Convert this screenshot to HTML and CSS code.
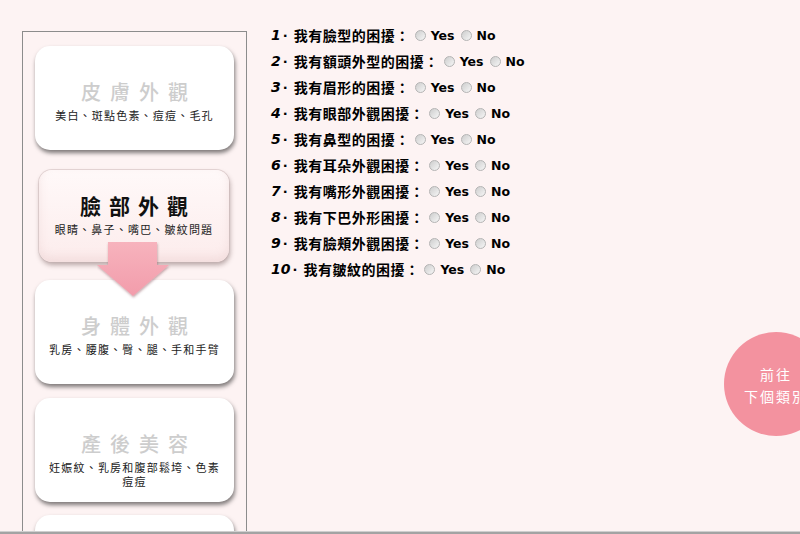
FILE: index.html
```html
<!DOCTYPE html>
<html lang="zh-Hant">
<head>
<meta charset="utf-8">
<title>問卷</title>
<link rel="stylesheet" href="styles.css">
</head>
<body>
<div class="page">
  <aside class="panel">
    <div class="card">
      <div class="card-title">皮膚外觀</div>
      <div class="card-sub">美白、斑點色素、痘痘、毛孔</div>
    </div>
    <div class="card card-active">
      <div class="card-title">臉部外觀</div>
      <div class="card-sub">眼睛、鼻子、嘴巴、皺紋問題</div>
      <svg class="arrow" width="74" height="58" viewBox="0 0 74 58">
        <defs>
          <linearGradient id="ag" x1="0" y1="0" x2="0" y2="1">
            <stop offset="0" stop-color="#f7b3bd"/>
            <stop offset="1" stop-color="#f29cab"/>
          </linearGradient>
          <filter id="as" x="-20%" y="-20%" width="140%" height="150%">
            <feDropShadow dx="0.5" dy="1.5" stdDeviation="1.2" flood-color="#7a3d45" flood-opacity="0.45"/>
          </filter>
        </defs>
        <polygon points="11,0 60,0 60,23 72,23 36,54 0,23 11,23" fill="url(#ag)" filter="url(#as)"/>
      </svg>
    </div>
    <div class="card">
      <div class="card-title">身體外觀</div>
      <div class="card-sub">乳房、腰腹、臀、腿、手和手臂</div>
    </div>
    <div class="card">
      <div class="card-title">產後美容</div>
      <div class="card-sub">妊娠紋、乳房和腹部鬆垮、色素痘痘</div>
    </div>
    <div class="card"></div>
  </aside>

  <main class="questions">
    <div class="q"><span class="num">1</span><span class="dot">·</span><span class="qt">我有臉型的困擾：</span><span class="radio"></span><span class="opt">Yes</span><span class="radio"></span><span class="opt">No</span></div>
    <div class="q"><span class="num">2</span><span class="dot">·</span><span class="qt">我有額頭外型的困擾：</span><span class="radio"></span><span class="opt">Yes</span><span class="radio"></span><span class="opt">No</span></div>
    <div class="q"><span class="num">3</span><span class="dot">·</span><span class="qt">我有眉形的困擾：</span><span class="radio"></span><span class="opt">Yes</span><span class="radio"></span><span class="opt">No</span></div>
    <div class="q"><span class="num">4</span><span class="dot">·</span><span class="qt">我有眼部外觀困擾：</span><span class="radio"></span><span class="opt">Yes</span><span class="radio"></span><span class="opt">No</span></div>
    <div class="q"><span class="num">5</span><span class="dot">·</span><span class="qt">我有鼻型的困擾：</span><span class="radio"></span><span class="opt">Yes</span><span class="radio"></span><span class="opt">No</span></div>
    <div class="q"><span class="num">6</span><span class="dot">·</span><span class="qt">我有耳朵外觀困擾：</span><span class="radio"></span><span class="opt">Yes</span><span class="radio"></span><span class="opt">No</span></div>
    <div class="q"><span class="num">7</span><span class="dot">·</span><span class="qt">我有嘴形外觀困擾：</span><span class="radio"></span><span class="opt">Yes</span><span class="radio"></span><span class="opt">No</span></div>
    <div class="q"><span class="num">8</span><span class="dot">·</span><span class="qt">我有下巴外形困擾：</span><span class="radio"></span><span class="opt">Yes</span><span class="radio"></span><span class="opt">No</span></div>
    <div class="q"><span class="num">9</span><span class="dot">·</span><span class="qt">我有臉頰外觀困擾：</span><span class="radio"></span><span class="opt">Yes</span><span class="radio"></span><span class="opt">No</span></div>
    <div class="q"><span class="num">10</span><span class="dot">·</span><span class="qt">我有皺紋的困擾：</span><span class="radio"></span><span class="opt">Yes</span><span class="radio"></span><span class="opt">No</span></div>
  </main>
</div>

<a class="next-btn" href="#">前往<br>下個類別</a>
<div class="hscroll"></div>
</body>
</html>
```

FILE: styles.css
```css
html, body {
  margin: 0;
  padding: 0;
  height: 100%;
  overflow: hidden;
}

body {
  background: #fdf3f3;
  font-family: "Noto Sans CJK TC", "Noto Sans", sans-serif;
  color: #000;
}

.page {
  display: flex;
  align-items: flex-start;
  padding-left: 22px;
}

/* ---------- left category panel ---------- */
.panel {
  margin-top: 31px;
  width: 199px;
  height: 620px;
  padding: 14px 12px 0 12px;
  border: 1px solid #8c8c8c;
  border-bottom: none;
  display: flex;
  flex-direction: column;
  gap: 13.5px;
  flex-shrink: 0;
}

.card {
  position: relative;
  height: 104px;
  flex-shrink: 0;
  box-sizing: border-box;
  padding: 30px 10px 0;
  background: #fff;
  border-radius: 15px;
  box-shadow: 1px 3px 4px rgba(0, 0, 0, 0.5);
  text-align: center;
}

.card-title {
  font-size: 20px;
  line-height: 32px;
  font-weight: 500;
  letter-spacing: 9px;
  padding-left: 9px;
  color: #cdcdcd;
}

.card-sub {
  font-size: 11px;
  line-height: 14px;
  letter-spacing: 1.2px;
  color: #222;
}

.card-active {
  height: 92px;
  margin: 6px 5px 5px 4px;
  padding-top: 18px;
  background: linear-gradient(#fff9f9, #fcecec);
  border-radius: 13px;
  box-shadow: 0 0 0 1px rgba(200, 180, 180, 0.45),
              1px 3px 5px rgba(80, 50, 50, 0.4),
              inset 0 -5px 8px rgba(220, 180, 180, 0.25);
}

.card-active .card-title {
  font-size: 21px;
  line-height: 34px;
  font-weight: 700;
  letter-spacing: 8px;
  padding-left: 8px;
  color: #111;
}

.arrow {
  position: absolute;
  left: 58px;
  top: 72px;
  z-index: 2;
}

/* ---------- questions ---------- */
.questions {
  margin-left: 24px;
  padding-top: 22px;
  display: flex;
  flex-direction: column;
}

.q {
  display: flex;
  align-items: center;
  height: 26px;
  white-space: nowrap;
}

.num {
  font-family: "DejaVu Sans", sans-serif;
  font-weight: 700;
  font-style: italic;
  font-size: 14px;
  margin-right: 2px;
}

.dot {
  font-family: "DejaVu Sans", sans-serif;
  font-weight: 700;
  font-size: 13px;
  margin-right: 6px;
}

.qt {
  font-size: 14px;
  font-weight: 700;
  letter-spacing: 0.5px;
}

.radio {
  width: 11px;
  height: 11px;
  box-sizing: border-box;
  border-radius: 50%;
  border: 1px solid #b4b4b4;
  background: linear-gradient(135deg, #cdcdcd, #f6f6f6);
  margin: 0 5px 0 5px;
}

.opt {
  font-family: "DejaVu Sans", sans-serif;
  font-weight: 700;
  font-size: 12.5px;
  margin-right: 1px;
}

/* ---------- floating next button ---------- */
.next-btn {
  position: absolute;
  left: 724px;
  top: 332px;
  width: 104px;
  height: 104px;
  box-sizing: border-box;
  padding-top: 31px;
  border-radius: 50%;
  background: #f3929f;
  color: #fff;
  text-decoration: none;
  text-align: center;
  font-size: 14px;
  line-height: 22px;
  letter-spacing: 2px;
  white-space: nowrap;
}

.hscroll {
  position: fixed;
  left: 0;
  right: 0;
  bottom: 0;
  height: 2px;
  border-top: 1px solid #cfcfcf;
  background: #a3a3a3;
}
```
